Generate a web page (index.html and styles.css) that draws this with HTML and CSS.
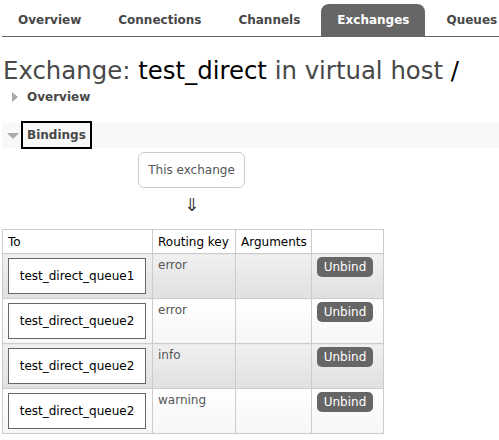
FILE: index.html
```html
<!DOCTYPE html>
<html>
<head>
<meta charset="utf-8">
<link rel="stylesheet" href="styles.css">
</head>
<body>
<div class="page">
  <nav class="tabs">
    <a class="tab">Overview</a>
    <a class="tab">Connections</a>
    <a class="tab">Channels</a>
    <a class="tab active">Exchanges</a>
    <a class="tab">Queues</a>
  </nav>
  <h1 class="title">Exchange: <b>test_direct</b> in virtual host <b>/</b></h1>
  <div class="section closed"><span class="tri-right"></span><span class="sec-label">Overview</span></div>
  <div class="section open">
    <span class="tri-down"></span><span class="sec-label boxed">Bindings</span>
  </div>
  <div class="bindings">
    <div class="diagram">
      <div class="this-ex">This exchange</div>
      <div class="arrow">&#8659;</div>
    </div>
    <table class="list">
      <colgroup>
        <col class="c-to"><col class="c-rk"><col class="c-arg"><col class="c-act">
      </colgroup>
      <thead>
        <tr><th>To</th><th>Routing key</th><th>Arguments</th><th></th></tr>
      </thead>
      <tbody>
        <tr class="alt1"><td><div class="queue">test_direct_queue1</div></td><td>error</td><td></td><td><button class="unbind">Unbind</button></td></tr>
        <tr class="alt2"><td><div class="queue">test_direct_queue2</div></td><td>error</td><td></td><td><button class="unbind">Unbind</button></td></tr>
        <tr class="alt1"><td><div class="queue">test_direct_queue2</div></td><td>info</td><td></td><td><button class="unbind">Unbind</button></td></tr>
        <tr class="alt2"><td><div class="queue">test_direct_queue2</div></td><td>warning</td><td></td><td><button class="unbind">Unbind</button></td></tr>
      </tbody>
    </table>
  </div>
</div>
</body>
</html>
```
FILE: styles.css
```css
html, body {
  margin: 0;
  padding: 0;
  background: #fff;
}
body {
  font-family: "DejaVu Sans", Verdana, sans-serif;
  font-size: 12px;
  color: #484848;
}
.page {
  padding-left: 2px;
}
.tabs {
  display: flex;
  gap: 5px;
  padding-top: 4px;
  border-bottom: 1px solid #666;
  height: 32px;
}
.tab {
  display: block;
  padding: 0 16px;
  line-height: 32px;
  font-weight: bold;
  font-size: 12px;
  color: #484848;
  border-radius: 8px 8px 0 0;
  white-space: nowrap;
}
.tab:last-child {
  padding-right: 0;
}
.tab.active {
  background: #666;
  color: #fff;
}
.title {
  margin: 19px 0 0 1px;
  font-size: 24.4px;
  font-weight: normal;
  line-height: 30px;
  color: #484848;
}
.title b {
  font-weight: normal;
  color: #000;
}
.section {
  display: flex;
  align-items: center;
}
.section.closed {
  height: 18px;
  margin-top: 2px;
  padding-left: 10px;
}
.tri-right {
  width: 0;
  height: 0;
  border-top: 5px solid transparent;
  border-bottom: 5px solid transparent;
  border-left: 6px solid #aaa;
  margin-right: 9px;
}
.sec-label {
  font-weight: bold;
  color: #484848;
}
.section.open {
  margin-top: 17px;
  height: 25px;
  background: #f8f8f8;
  padding-left: 5px;
}
.tri-down {
  width: 0;
  height: 0;
  border-left: 6px solid transparent;
  border-right: 6px solid transparent;
  border-top: 6px solid #aaa;
  margin-right: 2px;
}
.sec-label.boxed {
  border: 2px solid #000;
  line-height: 24px;
  padding: 0 4px;
  box-sizing: border-box;
  height: 28px;
  margin-top: -1px;
}
.diagram {
  display: flex;
  flex-direction: column;
  align-items: flex-start;
  padding-left: 136px;
  margin-top: 4px;
}
.this-ex {
  border: 1px solid #ccc;
  border-radius: 6px;
  width: 107px;
  height: 36px;
  box-sizing: border-box;
  text-align: center;
  line-height: 34px;
  color: #555;
}
.arrow {
  width: 107px;
  text-align: center;
  font-size: 18px;
  line-height: 24px;
  margin-top: 5px;
  color: #333;
}
table.list {
  margin-top: 12px;
  border-collapse: collapse;
  border: 1px solid #ccc;
  table-layout: fixed;
  width: 381px;
}
.c-to { width: 150px; }
.c-rk { width: 83px; }
.c-arg { width: 76px; }
.c-act { width: 72px; }
table.list th, table.list td {
  border: 1px solid #ccc;
  padding: 0;
  text-align: left;
  vertical-align: top;
  white-space: nowrap;
}
table.list th {
  font-weight: normal;
  color: #000;
  height: 23px;
  padding: 0 5px;
  vertical-align: middle;
  background: #fff;
}
table.list td {
  height: 45px;
  padding: 4px 5px 0;
  box-sizing: border-box;
  color: #555;
}
tr.alt1 td {
  background: linear-gradient(#f0f0f0, #e0e0e0);
}
tr.alt2 td {
  background: linear-gradient(#ffffff, #f6f6f6);
}
.queue {
  width: 138px;
  height: 36px;
  box-sizing: border-box;
  border: 1px solid #666;
  background: #fff;
  color: #000;
  text-align: center;
  line-height: 34px;
}
.unbind {
  display: block;
  margin-top: -1px;
  width: 56px;
  height: 20px;
  padding: 0;
  border: 0;
  border-radius: 5px;
  background: #666;
  color: #fff;
  font-family: "DejaVu Sans", Verdana, sans-serif;
  font-size: 12px;
  line-height: 20px;
}
```
